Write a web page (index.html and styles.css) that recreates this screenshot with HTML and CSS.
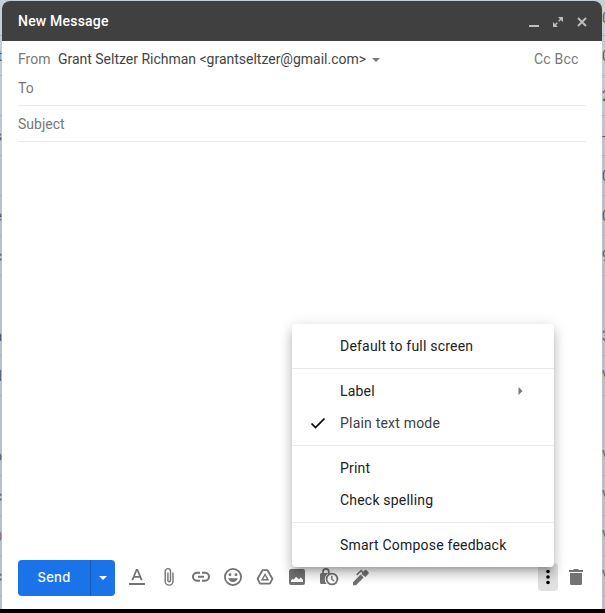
FILE: index.html
```html
<!DOCTYPE html>
<html lang="en">
<head>
<meta charset="utf-8">
<title>New Message</title>
<link rel="stylesheet" href="styles.css">
</head>
<body>
<div class="backdrop">
  <div class="inbox left" aria-hidden="true">
    <span></span><span>t</span><span></span><span>s</span><span></span><span>e</span><span>c</span><span class="open"></span><span class="strong">m</span><span>l</span><span class="open"></span><span>o</span><span>c</span><span>@</span><span>c</span>
  </div>
  <main class="compose">
    <header class="titlebar">
      <h1>New Message</h1>
      <svg class="winicon" viewBox="0 0 12 12"><path d="M1 9h10v2H1z"/></svg>
      <svg class="winicon" viewBox="0 0 12 12"><path d="M6 1h5v5zM1 6v5h5z"/><path class="shaft" d="M2.500 9.500l2.800-2.800M6.700 5.300l2.800-2.800"/></svg>
      <svg class="winicon" viewBox="0 0 12 12"><path class="cross" d="M2 2l8 8M10 2l-8 8"/></svg>
    </header>
    <div class="from">
      <span class="muted">From</span>
      <span class="sender">Grant Seltzer Richman &lt;grantseltzer@gmail.com&gt;</span>
      <svg class="caret" viewBox="0 0 8 4"><path d="M0 0h8L4 4z"/></svg>
      <span class="muted copies">Cc Bcc</span>
    </div>
    <div class="field to">To</div>
    <div class="field subject">Subject</div>
    <div class="message"></div>
    <footer class="toolbar">
      <div class="send"><span class="sendtext">Send</span><span class="sendmore"><svg viewBox="0 0 8 4"><path d="M0 0h8L4 4z"/></svg></span></div>
      <div class="tools">
        <svg viewBox="0 0 20 20"><path d="M2 16h16v2H2zM9 2h2l4.700 11.200h-2l-1-2.500H7.300l-1 2.500h-2zM10 4.100L8 9h4z"/></svg>
        <svg viewBox="0 0 20 20"><path class="line thin" d="M14 5.500v8.700a3.900 3.900 0 0 1-7.800 0V4.300a2.600 2.600 0 0 1 5.300 0v9.100a1.300 1.300 0 0 1-2.600 0V5.500"/></svg>
        <svg viewBox="0 0 20 20"><path class="line heavy" d="M9 5.800H6a4 4 0 0 0 0 8H9M11 5.800h3a4 4 0 0 1 0 8H11M7 9.800h6"/></svg>
        <svg viewBox="0 0 20 20"><circle class="line" cx="10" cy="10" r="8.100"/><circle cx="7" cy="7.700" r="1.400"/><circle cx="13" cy="7.700" r="1.400"/><path d="M5.200 11.300h9.600c-.7 2.300-2.500 3.800-4.800 3.800s-4.100-1.500-4.800-3.800z"/></svg>
        <svg viewBox="0 0 20 20"><path class="line" stroke-linejoin="round" d="M7.500 3.200h5l4.900 8.600-2.500 4.800H5.100l-2.500-4.800z"/><path class="line thin" d="M10 7.500l-3 5.300h6z"/></svg>
        <svg viewBox="0 0 20 20"><path fill-rule="evenodd" d="M4 2h12a2 2 0 0 1 2 2v12a2 2 0 0 1-2 2H4a2 2 0 0 1-2-2V4a2 2 0 0 1 2-2zM4 15h12v-2l-2.200-2.800-1.800 2L9 9.800l-2.300 3-1-1L4 13.500z"/></svg>
        <svg viewBox="0 0 20 20"><path class="line" d="M4 7V4.800a2.900 2.900 0 0 1 5.800 0V7"/><path d="M2.500 6H10a6.800 6.800 0 0 0-2.300 11H2.500A1.500 1.500 0 0 1 1 15.500v-8A1.500 1.500 0 0 1 2.500 6z"/><circle class="line" cx="13" cy="12" r="5.400"/><path class="line thin" d="M12.800 8.700v3.500l2.300 1.800"/></svg>
        <svg viewBox="0 0 20 20"><path d="M2 15.200l7.600-7.600 3 3L5 18.200H2zM10.300 6.900l1-1-1.200-1.100-3.800 3.800-1.200-1.100 5-5 2.200 2.200 1.400-1.400a1.300 1.300 0 0 1 1.900 0l1.700 1.700a1.300 1.300 0 0 1 0 1.900l-3 3z"/></svg>
      </div>
      <div class="more"><svg viewBox="0 0 4 16"><circle cx="2" cy="2.500" r="1.800"/><circle cx="2" cy="8" r="1.800"/><circle cx="2" cy="13.500" r="1.800"/></svg></div>
      <svg class="trash" viewBox="0 0 14 16"><path d="M0 1h4l1-1h4l1 1h4v2H0zM1 4h12v10.500a1.500 1.500 0 0 1-1.500 1.500h-9A1.500 1.500 0 0 1 1 14.500z"/></svg>
    </footer>
    <nav class="menu">
      <div class="group"><div class="item">Default to full screen</div></div>
      <div class="group"><div class="item">Label<svg class="submenu" viewBox="0 0 4 8"><path d="M0 0l4 4-4 4z"/></svg></div>
      <div class="item checked"><svg class="check" viewBox="0 0 16 12"><path d="M1.500 6.500l4 4L14.500 1.500"/></svg>Plain text mode</div></div>
      <div class="group"><div class="item">Print</div><div class="item">Check spelling</div></div>
      <div class="group"><div class="item">Smart Compose feedback</div></div>
    </nav>
  </main>
  <div class="inbox right" aria-hidden="true">
    <span>0</span><span>0</span><span>2</span><span>-</span><span>0</span><span>0</span><span>9</span><span class="open"></span><span>3</span><span>\</span><span class="open"></span><span>\</span><span>\</span><span>\</span><span>\</span>
  </div>
</div>
</body>
</html>
```
FILE: styles.css
```css
* { box-sizing: border-box; }
body { margin: 0; width: 605px; height: 613px; overflow: hidden; background: #000; font: 14px/20px Roboto, sans-serif; }
svg { display: block; flex: none; overflow: visible; }
.backdrop { display: grid; grid-template-columns: 2px 600px 3px; height: 609px; overflow: hidden; background: linear-gradient(#c5d1d9, #b7bfc9 35%, #b9c0ca); }
.inbox { height: 609px; overflow: hidden; color: #555b62; }
.inbox span { display: flex; height: 40px; align-items: center; border-bottom: 1px solid #a9b3be; }
.inbox span:first-child { height: 36px; }
.inbox .open { border-color: transparent; }
.left span { justify-content: flex-end; }
.inbox .strong { font-weight: 700; }
.compose { position: relative; display: flex; flex-direction: column; margin-top: 1px; height: 608px; border-radius: 8px 8px 0 0; background: #fff; overflow: hidden; }
.titlebar { display: flex; align-items: center; gap: 12px; height: 40px; padding: 0 14px 0 16px; background: #404040; color: #fff; }
.titlebar h1 { flex: 1; margin: 0; font: 500 14px/20px Roboto, sans-serif; letter-spacing: .2px; }
.winicon { width: 12px; height: 12px; fill: #bdbdbd; margin-top: 2px; }
.cross { stroke: #bdbdbd; stroke-width: 2; fill: none; }
.shaft { stroke: #bdbdbd; stroke-width: 1.4; fill: none; }
.from { display: flex; align-items: center; height: 35px; padding: 1px 23.5px 0 16px; }
.muted, .field { color: #777; }
.sender { margin-left: 7.5px; color: #444; letter-spacing: -.01px; }
.caret { width: 8px; height: 4px; margin: 2px 0 0 6px; fill: #777; }
.copies { margin-left: auto; letter-spacing: .2px; }
.field { margin: 0 16px; border-bottom: 1px solid #e8e8e8; }
.to { height: 30px; padding-top: 2px; }
.subject { height: 36px; padding-top: 8px; }
.message { flex: 1; }
.toolbar { display: flex; align-items: center; height: 64px; padding: 0 19px 0 16px; fill: #737373; }
.send { display: flex; width: 97px; height: 36px; margin-top: 2px; border-radius: 4px; background: #1a73e8; color: #fff; overflow: hidden; }
.sendtext { width: 72px; text-align: center; font: 500 13px/34px Inter, sans-serif; letter-spacing: .3px; }
.sendmore { display: flex; flex: 1; align-items: center; justify-content: center; border-left: 1px solid #155cba; fill: #fff; }
.sendmore svg { width: 8px; height: 4px; }
.tools { display: flex; gap: 12px; margin-left: 12px; }
.tools svg { width: 20px; height: 20px; }
.line { fill: none; stroke: #737373; stroke-width: 1.8; }
.thin { stroke-width: 1.400; }
.heavy { stroke-width: 2; }
.more { display: flex; align-items: center; justify-content: center; width: 20px; height: 28px; margin-left: auto; border-radius: 4px; background: #e0e0e0; fill: #000; }
.more svg { width: 4px; height: 16px; }
.trash { width: 14px; height: 16px; margin-left: 11px; }
.menu { position: absolute; left: 290px; top: 323px; width: 262px; height: 243px; background: #fff; border-radius: 4px; color: #202124; letter-spacing: .2px; box-shadow: 0 8px 10px 1px rgba(0,0,0,.14), 0 3px 14px 2px rgba(0,0,0,.12), 0 5px 5px -3px rgba(0,0,0,.2); }
.group { padding: 6px 0; }
.group + .group { border-top: 1px solid #e8e8e8; }
.item { display: flex; align-items: center; height: 32px; padding: 0 31px 0 48px; }
.submenu { width: 5px; height: 8px; margin-left: auto; fill: #777; }
.checked { padding-left: 18px; color: #3c4043; }
.check { width: 16px; height: 12px; margin-right: 14px; fill: none; stroke: #000; stroke-width: 1.7; }
```
